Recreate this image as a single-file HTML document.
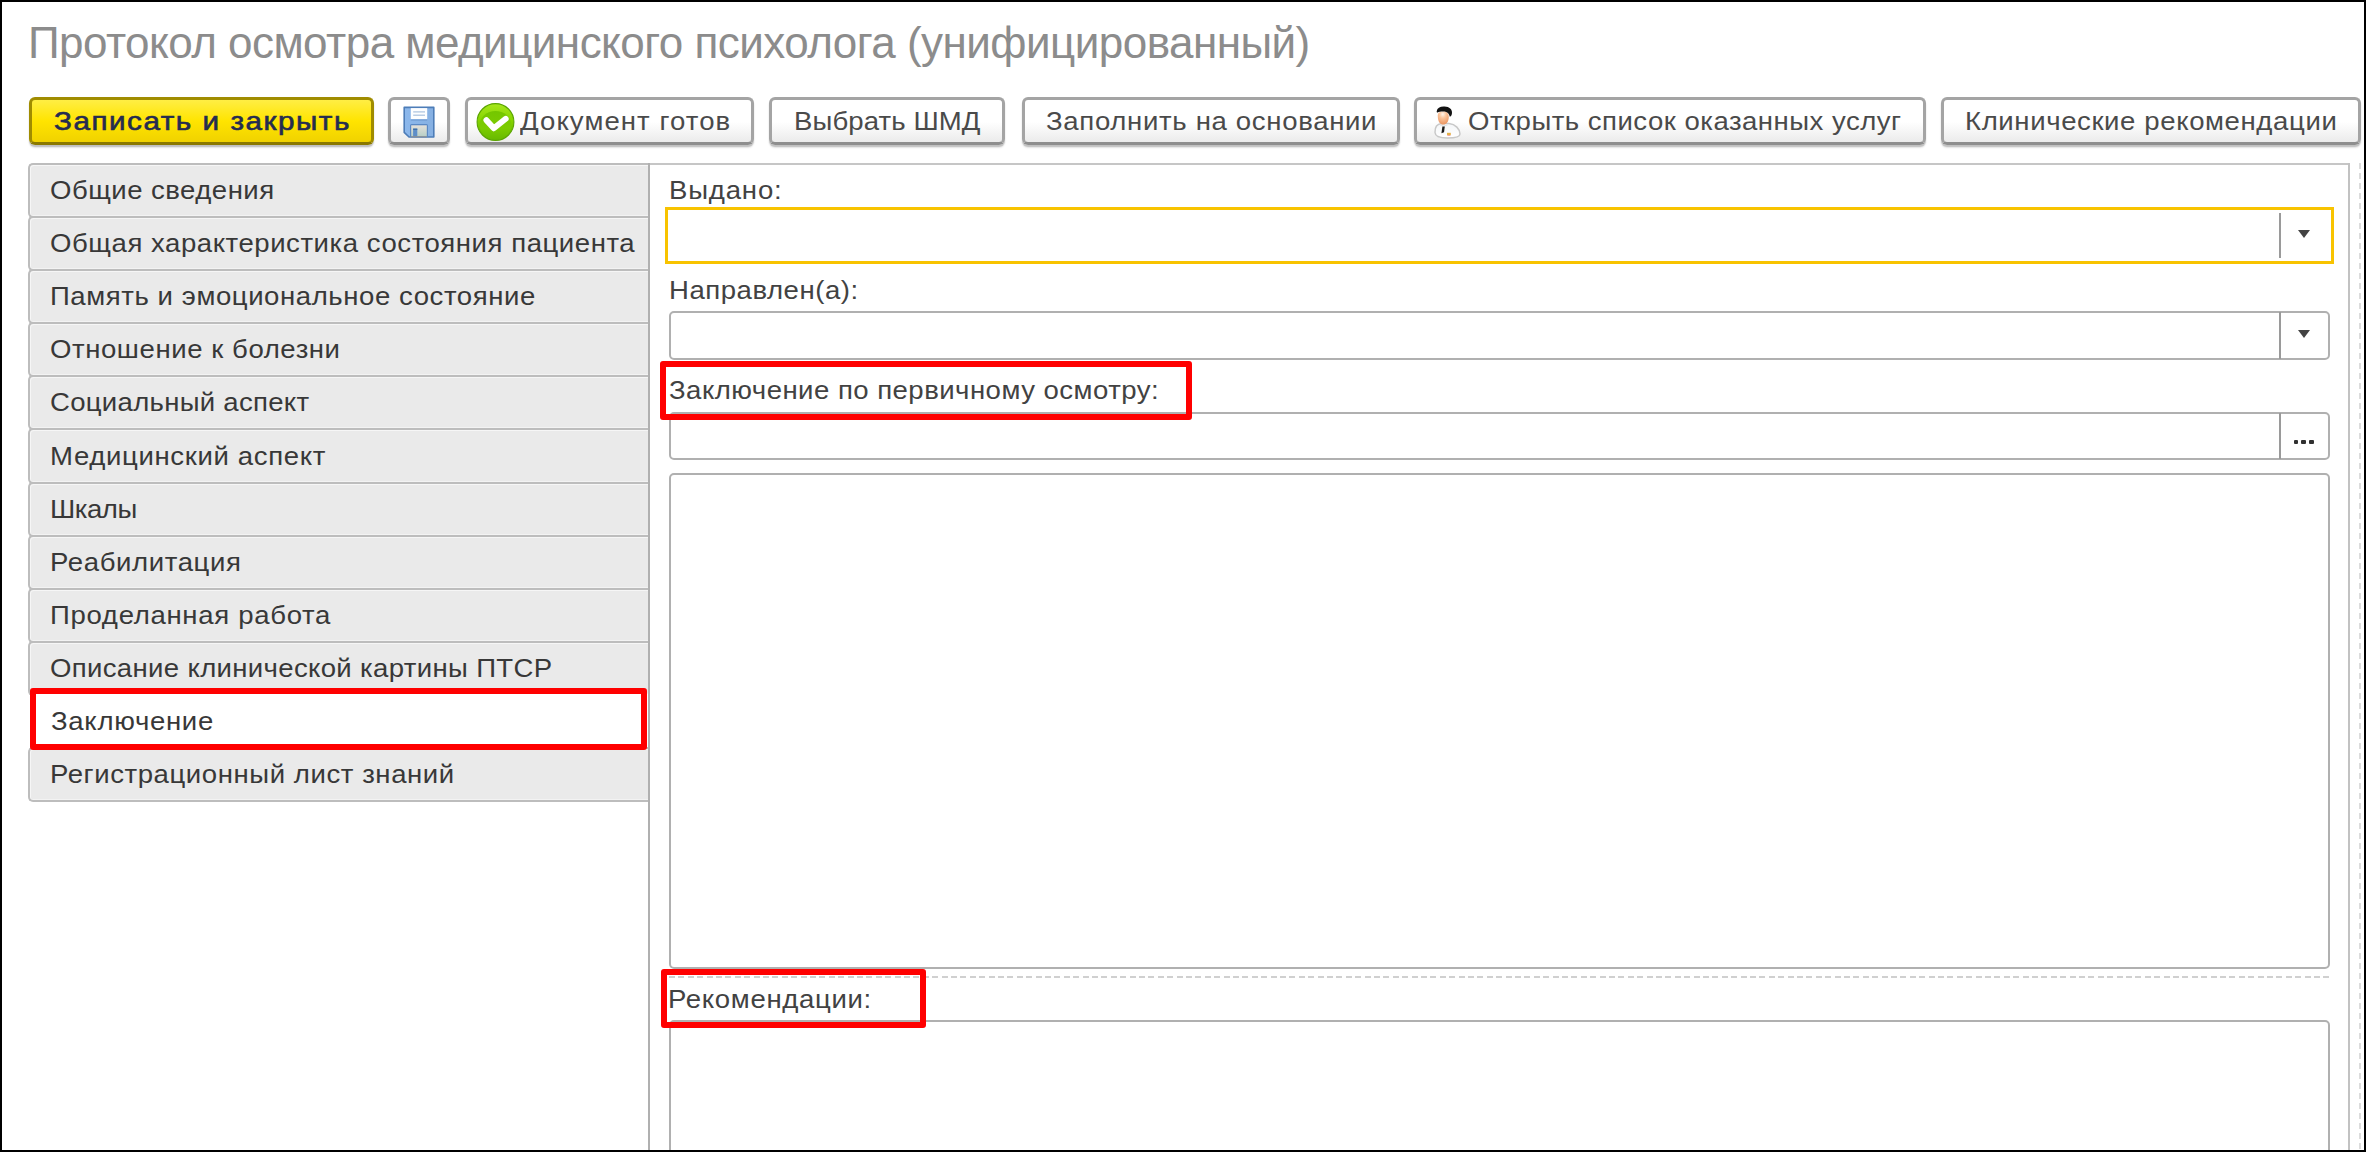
<!DOCTYPE html><html><head><meta charset="utf-8"><style>
html,body{margin:0;padding:0;}
body{width:2366px;height:1152px;position:relative;overflow:hidden;background:#fff;font-family:"Liberation Sans",sans-serif;}
.t{position:absolute;white-space:nowrap;}
.a{position:absolute;}
.btn{position:absolute;top:97px;height:48px;box-sizing:border-box;border:3px solid #a4a4a4;border-bottom-color:#8e8e8e;border-radius:6px;background:linear-gradient(#ffffff 0%,#ffffff 52%,#ebebeb 100%);box-shadow:0 2px 1px 0 rgba(0,0,0,0.16), 0 3px 2px 0 rgba(0,0,0,0.10);}
.ybtn{border-color:#a08c00;border-bottom-color:#8a7800;background:linear-gradient(#ffee44 0%,#ffe400 50%,#f0d200 100%);}
.tab{position:absolute;left:28px;width:622px;box-sizing:border-box;border:2px solid #bdbdbd;border-right:none;border-radius:5px 0 0 5px;background:#eaeaea;box-shadow:inset 1px 1px 0 #f6f6f6, inset 0 -1px 0 #f3f3f3;}
.fld{position:absolute;box-sizing:border-box;border:2px solid #b0b0b0;border-radius:5px;background:#fff;}
.red{position:absolute;box-sizing:border-box;border:6px solid #ff0000;border-radius:3px;z-index:20;}
.vsep{position:absolute;width:2px;background:#9a9a9a;}
</style></head><body>
<div class="a" style="left:0;top:0;width:2366px;height:2px;background:#000;z-index:60"></div>
<div class="a" style="left:0;top:1150px;width:2366px;height:2px;background:#000;z-index:60"></div>
<div class="a" style="left:0;top:0;width:2px;height:1152px;background:#000;z-index:60"></div>
<div class="a" style="left:2364px;top:0;width:2px;height:1152px;background:#000;z-index:60"></div>
<div class="btn ybtn" style="left:29px;width:345px;"></div>
<div class="btn" style="left:388px;width:62px;"></div>
<div class="btn" style="left:465px;width:289px;"></div>
<div class="btn" style="left:769px;width:236px;"></div>
<div class="btn" style="left:1022px;width:378px;"></div>
<div class="btn" style="left:1414px;width:512px;"></div>
<div class="btn" style="left:1941px;width:420px;"></div>
<div class="a" style="left:649px;top:163px;width:1701px;height:2px;background:#c6c6c6;"></div>
<div class="a" style="left:2348px;top:163px;width:2px;height:1000px;background:#c2c2c2;"></div>
<div class="a" style="left:648px;top:163px;width:2px;height:1000px;background:#b0b0b0;z-index:3"></div>
<div class="a" style="left:2359px;top:163px;width:2px;height:990px;background:repeating-linear-gradient(#dcdcdc 0 6px,transparent 6px 10px);"></div>
<div class="tab" style="top:163px;height:55px;"></div>
<div class="tab" style="top:216px;height:55px;"></div>
<div class="tab" style="top:269px;height:55px;"></div>
<div class="tab" style="top:322px;height:55px;"></div>
<div class="tab" style="top:375px;height:55px;"></div>
<div class="tab" style="top:428px;height:56px;"></div>
<div class="tab" style="top:482px;height:55px;"></div>
<div class="tab" style="top:535px;height:55px;"></div>
<div class="tab" style="top:588px;height:55px;"></div>
<div class="tab" style="top:641px;height:55px;"></div>
<div class="tab" style="top:694px;height:55px;background:#fff;border-color:#fff;box-shadow:none;"></div>
<div class="tab" style="top:747px;height:55px;"></div>
<div class="red" style="left:30px;top:688px;width:617px;height:62px;"></div>
<div class="fld" style="left:665px;top:207px;width:1669px;height:57px;border:3px solid #f8c300;border-radius:0;"></div>
<div class="vsep" style="left:2279px;top:213px;height:45px;"></div>
<div class="fld" style="left:669px;top:311px;width:1661px;height:49px;"></div>
<div class="vsep" style="left:2279px;top:312px;height:47px;"></div>
<div class="red" style="left:660px;top:361px;width:532px;height:59px;"></div>
<div class="fld" style="left:669px;top:412px;width:1661px;height:48px;"></div>
<div class="vsep" style="left:2279px;top:413px;height:46px;"></div>
<div class="fld" style="left:669px;top:473px;width:1661px;height:496px;"></div>
<div class="a" style="left:669px;top:976px;width:1661px;height:2px;background:repeating-linear-gradient(90deg,#d0d0d0 0 6px,transparent 6px 9.4px);"></div>
<div class="red" style="left:661px;top:969px;width:265px;height:59px;"></div>
<div class="fld" style="left:669px;top:1020px;width:1661px;height:200px;"></div>
<div class="a" style="left:2298px;top:230px;width:0;height:0;border-left:6px solid transparent;border-right:6px solid transparent;border-top:8px solid #424242;"></div>
<div class="a" style="left:2298px;top:330px;width:0;height:0;border-left:6px solid transparent;border-right:6px solid transparent;border-top:8px solid #424242;"></div>
<div class="a" style="left:2293.5px;top:440px;width:4.6px;height:4px;border-radius:1px;background:#303030;"></div>
<div class="a" style="left:2301.4px;top:440px;width:4.6px;height:4px;border-radius:1px;background:#303030;"></div>
<div class="a" style="left:2309.3px;top:440px;width:4.6px;height:4px;border-radius:1px;background:#303030;"></div>
<svg class="a" style="left:398px;top:101px;z-index:7" width="42" height="42" viewBox="0 0 42 42">
<defs><linearGradient id="shut" x1="0" y1="0" x2="0" y2="1"><stop offset="0" stop-color="#e4e0da"/><stop offset="1" stop-color="#b8cfc6"/></linearGradient>
<linearGradient id="flb" x1="0" y1="0" x2="1" y2="0"><stop offset="0" stop-color="#8cb8ec"/><stop offset="1" stop-color="#86b0e2"/></linearGradient></defs>
<path d="M6.2 6.4 H35.8 V36 H11 L6.2 31.4 Z" fill="url(#flb)" stroke="#4d7db8" stroke-width="1.6" stroke-linejoin="round"/>
<rect x="12.8" y="7.1" width="16.4" height="11" fill="#fdfeff"/>
<rect x="15.2" y="10.3" width="11.8" height="1.2" fill="#a9c1de"/>
<rect x="15.2" y="13.6" width="11.8" height="1.2" fill="#a9c1de"/>
<rect x="12.8" y="18.6" width="16.4" height="1" fill="#6f9ad0"/>
<path d="M12 36 V24.5 Q12 23 13.5 23 H28.5 Q30 23 30 24.5 V36 Z" fill="#5b89c4"/>
<rect x="13.2" y="24.3" width="15.6" height="11.2" fill="url(#shut)"/>
<rect x="15.1" y="27.6" width="4.2" height="8" fill="#5e8ec8"/>
<rect x="15.1" y="27.6" width="4.2" height="1.4" fill="#3f6fa8"/>
<rect x="13.2" y="35.3" width="15.6" height="1" fill="#8a8a8a"/>
</svg>
<svg class="a" style="left:472px;top:99px;z-index:7" width="46" height="46" viewBox="0 0 46 46">
<defs><linearGradient id="go" x1="0" y1="0" x2="0" y2="1"><stop offset="0" stop-color="#a6e81c"/><stop offset="0.45" stop-color="#86d400"/><stop offset="1" stop-color="#5cae00"/></linearGradient>
<linearGradient id="gi" x1="0" y1="0" x2="0" y2="1"><stop offset="0" stop-color="#74c600"/><stop offset="0.6" stop-color="#7ccc00"/><stop offset="1" stop-color="#68ba00"/></linearGradient></defs>
<circle cx="23.5" cy="23" r="18.4" fill="url(#go)" stroke="#5aa400" stroke-width="1.1"/>
<ellipse cx="23.5" cy="26.3" rx="15.8" ry="14.4" fill="url(#gi)"/>
<path d="M14.4 21.2 L21.8 29.3 L33.7 19.8" fill="none" stroke="#fff" stroke-width="5.9" stroke-linecap="round" stroke-linejoin="round"/>
</svg>
<svg class="a" style="left:1428px;top:101px;z-index:7" width="40" height="40" viewBox="0 0 40 40">
<defs><radialGradient id="sk" cx="0.45" cy="0.2" r="0.9"><stop offset="0" stop-color="#fff4ea"/><stop offset="0.35" stop-color="#fcc49a"/><stop offset="1" stop-color="#e58a55"/></radialGradient>
<linearGradient id="coat" x1="0" y1="0" x2="0" y2="1"><stop offset="0" stop-color="#f4f6f8"/><stop offset="1" stop-color="#ffffff"/></linearGradient></defs>
<path d="M7 31.5 C6.8 26 9.5 23 13.5 22.6 L21 22.6 C27.5 23.2 31.8 28 32 33 C32 36 27 37 19.5 37 C11 37 7.2 35.5 7 31.5 Z" fill="url(#coat)" stroke="#c8c8c8" stroke-width="1.5"/>
<path d="M12 24 Q15.5 26 19.5 24" fill="none" stroke="#dde3e8" stroke-width="1"/>
<path d="M14.4 25.6 L16.8 25.6 L16 31.2 L13.4 32.2 Z" fill="#1a1a1a"/>
<rect x="19" y="31.8" width="3.8" height="2.4" fill="#e4b048"/>
<rect x="19.4" y="34" width="3" height="0.9" fill="#f0a0a0"/>
<path d="M9.8 15.5 C9.6 12 11.5 10.6 15 10.6 C19 10.6 20.8 12.5 20.8 16 C20.8 20.5 18.5 23.6 15.2 23.6 C12 23.6 9.9 20.5 9.8 15.5 Z" fill="url(#sk)"/>
<path d="M8.7 10.2 C9.3 7 12 5.4 16.5 5.6 C21.5 5.8 24.2 8.4 24 12 C23.9 14 23.2 15.3 21.8 15.8 C21.2 13.2 20.2 11.5 18.2 10.9 C15 10.2 11.5 10.6 9.6 11.6 C9 11.4 8.6 10.9 8.7 10.2 Z" fill="#121212"/>
</svg>
<div class="t" style="left:27.93px;top:17.35px;font-size:44px;line-height:52px;font-weight:normal;letter-spacing:-0.533px;color:#8c8c8c;z-index:5;">Протокол осмотра медицинского психолога (унифицированный)</div>
<div class="t" style="left:54.23px;top:105.79px;font-size:26px;line-height:30px;font-weight:normal;letter-spacing:1.334px;color:#252c50;z-index:6;transform:scaleX(1.14);transform-origin:0 0;-webkit-text-stroke:0.6px #252c50;">Записать и закрыть</div>
<div class="t" style="left:519.60px;top:105.79px;font-size:26px;line-height:30px;font-weight:normal;letter-spacing:1.004px;color:#4a4a4a;z-index:6;transform:scaleX(1.06);transform-origin:0 0;">Документ готов</div>
<div class="t" style="left:794.24px;top:105.79px;font-size:26px;line-height:30px;font-weight:normal;letter-spacing:0.087px;color:#4a4a4a;z-index:6;transform:scaleX(1.06);transform-origin:0 0;">Выбрать ШМД</div>
<div class="t" style="left:1045.60px;top:105.79px;font-size:26px;line-height:30px;font-weight:normal;letter-spacing:0.630px;color:#4a4a4a;z-index:6;transform:scaleX(1.06);transform-origin:0 0;">Заполнить на основании</div>
<div class="t" style="left:1468.49px;top:105.79px;font-size:26px;line-height:30px;font-weight:normal;letter-spacing:0.461px;color:#4a4a4a;z-index:6;transform:scaleX(1.06);transform-origin:0 0;">Открыть список оказанных услуг</div>
<div class="t" style="left:1964.64px;top:105.79px;font-size:26px;line-height:30px;font-weight:normal;letter-spacing:0.570px;color:#4a4a4a;z-index:6;transform:scaleX(1.06);transform-origin:0 0;">Клинические рекомендации</div>
<div class="t" style="left:49.99px;top:174.99px;font-size:26px;line-height:30px;font-weight:normal;letter-spacing:0.440px;color:#383838;z-index:6;transform:scaleX(1.06);transform-origin:0 0;">Общие сведения</div>
<div class="t" style="left:49.99px;top:228.11px;font-size:26px;line-height:30px;font-weight:normal;letter-spacing:0.511px;color:#383838;z-index:6;transform:scaleX(1.06);transform-origin:0 0;">Общая характеристика состояния пациента</div>
<div class="t" style="left:49.67px;top:281.24px;font-size:26px;line-height:30px;font-weight:normal;letter-spacing:0.532px;color:#383838;z-index:6;transform:scaleX(1.06);transform-origin:0 0;">Память и эмоциональное состояние</div>
<div class="t" style="left:49.99px;top:334.36px;font-size:26px;line-height:30px;font-weight:normal;letter-spacing:0.529px;color:#383838;z-index:6;transform:scaleX(1.06);transform-origin:0 0;">Отношение к болезни</div>
<div class="t" style="left:49.90px;top:387.49px;font-size:26px;line-height:30px;font-weight:normal;letter-spacing:0.263px;color:#383838;z-index:6;transform:scaleX(1.06);transform-origin:0 0;">Социальный аспект</div>
<div class="t" style="left:49.64px;top:440.61px;font-size:26px;line-height:30px;font-weight:normal;letter-spacing:0.607px;color:#383838;z-index:6;transform:scaleX(1.06);transform-origin:0 0;">Медицинский аспект</div>
<div class="t" style="left:49.64px;top:493.74px;font-size:26px;line-height:30px;font-weight:normal;letter-spacing:-0.440px;color:#383838;z-index:6;transform:scaleX(1.06);transform-origin:0 0;">Шкалы</div>
<div class="t" style="left:49.64px;top:546.86px;font-size:26px;line-height:30px;font-weight:normal;letter-spacing:0.570px;color:#383838;z-index:6;transform:scaleX(1.06);transform-origin:0 0;">Реабилитация</div>
<div class="t" style="left:49.67px;top:599.99px;font-size:26px;line-height:30px;font-weight:normal;letter-spacing:0.634px;color:#383838;z-index:6;transform:scaleX(1.06);transform-origin:0 0;">Проделанная работа</div>
<div class="t" style="left:49.99px;top:653.11px;font-size:26px;line-height:30px;font-weight:normal;letter-spacing:0.312px;color:#383838;z-index:6;transform:scaleX(1.06);transform-origin:0 0;">Описание клинической картины ПТСР</div>
<div class="t" style="left:50.60px;top:706.24px;font-size:26px;line-height:30px;font-weight:normal;letter-spacing:0.641px;color:#383838;z-index:6;transform:scaleX(1.06);transform-origin:0 0;">Заключение</div>
<div class="t" style="left:49.64px;top:759.36px;font-size:26px;line-height:30px;font-weight:normal;letter-spacing:0.531px;color:#383838;z-index:6;transform:scaleX(1.06);transform-origin:0 0;">Регистрационный лист знаний</div>
<div class="t" style="left:668.54px;top:174.89px;font-size:26px;line-height:30px;font-weight:normal;letter-spacing:0.766px;color:#424242;z-index:5;transform:scaleX(1.06);transform-origin:0 0;">Выдано:</div>
<div class="t" style="left:668.54px;top:274.89px;font-size:26px;line-height:30px;font-weight:normal;letter-spacing:0.502px;color:#424242;z-index:5;transform:scaleX(1.06);transform-origin:0 0;">Направлен(а):</div>
<div class="t" style="left:669.40px;top:374.59px;font-size:26px;line-height:30px;font-weight:normal;letter-spacing:0.438px;color:#424242;z-index:5;transform:scaleX(1.06);transform-origin:0 0;">Заключение по первичному осмотру:</div>
<div class="t" style="left:668.14px;top:983.69px;font-size:26px;line-height:30px;font-weight:normal;letter-spacing:0.625px;color:#424242;z-index:5;transform:scaleX(1.06);transform-origin:0 0;">Рекомендации:</div>
</body></html>
